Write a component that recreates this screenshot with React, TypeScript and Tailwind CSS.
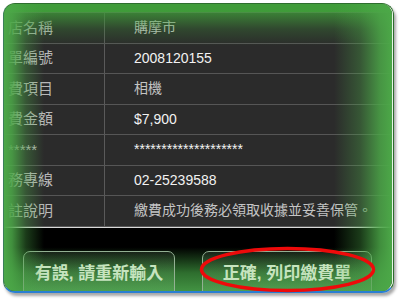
import React from "react";

const rows: { label: string; value: string; dim?: boolean }[] = [
  { label: "店名稱", value: "購摩市", dim: true },
  { label: "單編號", value: "2008120155" },
  { label: "費項目", value: "相機", dim: true },
  { label: "費金額", value: "$7,900" },
  { label: "*****", value: "********************" },
  { label: "務專線", value: "02-25239588" },
  { label: "註說明", value: "繳費成功後務必領取收據並妥善保管。", dim: true },
];

export default function App() {
  return (
    <div
      className="relative w-[400px] h-[300px] bg-white overflow-hidden"
      style={{ fontFamily: '"Liberation Sans", "Noto Sans CJK TC", sans-serif' }}
    >
      <div className="ml-[3px] mt-[3px] w-[391px] h-[290px] rounded-[12px] border border-[#2e6e2e] border-b-2 border-b-[#2a7fd2] border-l-[#3a7f5a] shadow-[2px_3px_3px_rgba(0,0,0,0.35)]">
        <div className="relative w-full h-full rounded-[11px] overflow-hidden bg-black border-r border-r-[#e8f5e8]">
          <div className="h-[8px] bg-[#3f9a3a]" />
          <div className="bg-[#2b2b2b] border-t border-[#6a6a6a]">
            {rows.map((r, i) => (
              <div key={i} className="flex h-[30.5px] border-b border-[#565656]">
                <div className="w-[101px] shrink-0 border-r border-[#5a5a5a] flex items-center pl-[4px] text-[15px] text-[#b8b8b8] overflow-hidden whitespace-nowrap">
                  {r.label}
                </div>
                <div
                  className={`flex items-center pl-[29px] text-[14px] whitespace-nowrap ${
                    r.dim ? "text-[#c4c4c4]" : "text-[#f2f2f2]"
                  }`}
                >
                  {r.value}
                </div>
              </div>
            ))}
          </div>
          <div className="h-[1px] bg-[#d8d8d8]" />
          <div className="h-[80px] bg-[linear-gradient(to_bottom,#000_24%,#2e6e2e_56%,#55b455_100%)] flex items-start pt-[23px] pl-[19px] gap-[27px]">
            <div className="w-[152px] h-[50px] rounded-[7px] border border-[#93b093] bg-[linear-gradient(to_bottom,rgba(255,255,255,0.06),rgba(120,200,120,0.25))] flex justify-center pt-[9px]">
              <span className="text-[17px] font-bold leading-[26px] text-[#c6e4bf] whitespace-nowrap">
                有誤, 請重新輸入
              </span>
            </div>
            <div className="w-[170px] h-[50px] rounded-[7px] border border-[#93b093] bg-[linear-gradient(to_bottom,rgba(255,255,255,0.06),rgba(120,200,120,0.25))] flex justify-center pt-[9px]">
              <span className="text-[17px] font-bold leading-[26px] text-[#c6e4bf] whitespace-nowrap">
                正確, 列印繳費單
              </span>
            </div>
          </div>
          <div className="pointer-events-none absolute left-0 right-0 top-0 h-[42px] bg-[linear-gradient(to_bottom,rgba(64,156,58,1)_0%,rgba(64,156,58,0.7)_25%,rgba(64,156,58,0.25)_60%,rgba(64,156,58,0)_100%)]" />
          <div className="pointer-events-none absolute left-0 top-0 bottom-0 w-[40px] bg-[linear-gradient(to_right,rgba(76,168,72,1)_0%,rgba(76,168,72,0.85)_20%,rgba(76,168,72,0.35)_55%,rgba(76,168,72,0)_100%)]" />
          <div className="pointer-events-none absolute right-0 top-0 bottom-0 w-[58px] bg-[linear-gradient(to_left,rgba(76,168,72,1)_0%,rgba(76,168,72,0.85)_20%,rgba(76,168,72,0.35)_55%,rgba(76,168,72,0)_100%)]" />
        </div>
      </div>
      <svg className="pointer-events-none absolute left-0 top-0" width="400" height="300">
        <ellipse cx="287.5" cy="269.5" rx="86" ry="21" fill="none" stroke="#ee0a0a" strokeWidth="3.5" />
      </svg>
    </div>
  );
}
